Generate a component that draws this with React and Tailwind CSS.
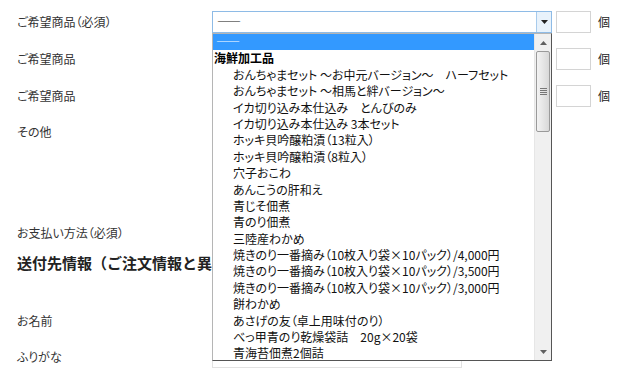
import React from 'react';

const items = [
  'おんちゃまセット ～お中元バージョン～　ハーフセット',
  'おんちゃまセット ～相馬と絆バージョン～',
  'イカ切り込み本仕込み　とんびのみ',
  'イカ切り込み本仕込み 3本セット',
  'ホッキ貝吟醸粕漬（13粒入）',
  'ホッキ貝吟醸粕漬（8粒入）',
  '穴子おこわ',
  'あんこうの肝和え',
  '青じそ佃煮',
  '青のり佃煮',
  '三陸産わかめ',
  '焼きのり一番摘み（10枚入り袋×10パック）/4,000円',
  '焼きのり一番摘み（10枚入り袋×10パック）/3,500円',
  '焼きのり一番摘み（10枚入り袋×10パック）/3,000円',
  '餅わかめ',
  'あさげの友（卓上用味付のり）',
  'べっ甲青のり乾燥袋詰　20g×20袋',
  '青海苔佃煮2個詰',
];

const Qty = () => (
  <div className="flex items-center">
    <div className="ml-[4px] w-[35px] h-[22px] border border-[#d4d4d4] bg-white" />
    <span className="ml-[7px] text-[#222]">個</span>
  </div>
);

const Row = ({ label, children }) => (
  <div className="flex items-center h-[22px]">
    <div className="w-[195px]">{label}</div>
    {children}
  </div>
);

const App = () => {
  return (
    <div
      className="relative w-[624px] h-[381px] overflow-hidden bg-white text-[12px] text-[#333] [font-feature-settings:'palt']"
      style={{ fontFamily: '"Noto Sans CJK JP", "Noto Sans", sans-serif' }}
    >
      <div className="pl-[17px] pt-[11px] flex flex-col">
        <Row label="ご希望商品（必須）">
          <div className="w-[340px] h-[22px] border border-[#8ebbe6] bg-white flex items-center justify-between">
            <span className="pl-[4px] text-[#111] tracking-[-4px]">――</span>
            <div className="w-[15px] h-[20px] bg-[#e8f2fb] border-l border-[#a8cbec] flex items-center justify-center">
              <svg width="7" height="4" viewBox="0 0 7 4"><path d="M0 0h7L3.5 4z" fill="#222" /></svg>
            </div>
          </div>
          <Qty />
        </Row>
        <div className="mt-[15px]">
          <Row label="ご希望商品">
            <div className="w-[340px] h-[22px] border border-[#ccc]" />
            <Qty />
          </Row>
        </div>
        <div className="mt-[15px]">
          <Row label="ご希望商品">
            <div className="w-[340px] h-[22px] border border-[#ccc]" />
            <Qty />
          </Row>
        </div>
        <div className="mt-[15px] flex h-[85px]">
          <div className="w-[195px] pt-[1px]">その他</div>
          <div className="w-[340px] h-[80px] border border-[#ccc]" />
        </div>
        <div className="mt-[15px]">
          <Row label="お支払い方法（必須）">
            <div className="w-[250px] h-[22px] border border-[#ccc]" />
          </Row>
        </div>
        <div className="mt-[8px] w-[195px] overflow-hidden">
          <h2 className="text-[15px] leading-[22px] font-bold text-[#222] whitespace-nowrap [font-feature-settings:normal]">
            送付先情報（ご注文情報と異なる場合）
          </h2>
        </div>
        <div className="mt-[36px]">
          <Row label="お名前">
            <div className="w-[250px] h-[22px] border border-[#e2e2e2]" />
          </Row>
        </div>
        <div className="mt-[14px]">
          <Row label="ふりがな">
            <div className="w-[250px] h-[22px] border border-[#e2e2e2]" />
          </Row>
        </div>
      </div>

      {/* open dropdown list */}
      <div className="absolute left-[212px] top-[33px] w-[340px] h-[328px] bg-white border-l border-t border-[#b5b5b5] border-r border-b border-r-[#555] border-b-[#555] flex text-[#111]">
        <div className="flex-1 overflow-hidden leading-[16.4px] whitespace-nowrap">
          <div className="h-[16.4px] bg-[#3399ff] text-white pl-[3px] tracking-[-4px]">――</div>
          <div className="h-[16.4px] font-bold pl-[1px] text-black">海鮮加工品</div>
          {items.map((it, i) => (
            <div key={i} className="h-[16.4px] pl-[20px]">{it}</div>
          ))}
        </div>
        <div className="w-[17px] h-full bg-[#f0f0f0] border-l border-[#e6e6e6] flex flex-col">
          <div className="h-[17px] flex items-center justify-center">
            <svg width="7" height="4" viewBox="0 0 7 4"><path d="M0 4h7L3.5 0z" fill="#606060" /></svg>
          </div>
          <div className="mx-[1px] h-[81px] rounded-[2px] border border-[#9a9a9a] bg-gradient-to-r from-[#f3f3f3] to-[#d8d8d8] flex items-center justify-center">
            <div className="flex flex-col gap-[1px]">
              <div className="w-[7px] h-[1px] bg-[#777]" />
              <div className="w-[7px] h-[1px] bg-[#777]" />
              <div className="w-[7px] h-[1px] bg-[#777]" />
              <div className="w-[7px] h-[1px] bg-[#777]" />
            </div>
          </div>
          <div className="flex-1" />
          <div className="h-[17px] flex items-center justify-center">
            <svg width="7" height="4" viewBox="0 0 7 4"><path d="M0 0h7L3.5 4z" fill="#606060" /></svg>
          </div>
        </div>
      </div>
    </div>
  );
};

export default App;
